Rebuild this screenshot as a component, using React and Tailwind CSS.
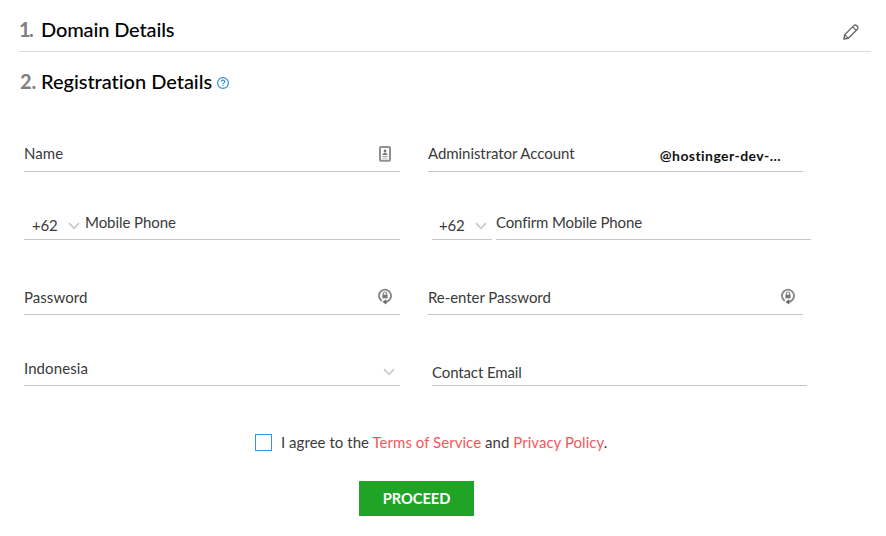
import React from "react";

function Chevron({ className = "" }) {
  return (
    <svg className={`shrink-0 ${className}`} width="12" height="8" viewBox="0 0 12 8" fill="none" stroke="#cacaca" strokeWidth="1.8">
      <path d="M1 1.2 6 6.3 11 1.2" />
    </svg>
  );
}

function Pencil() {
  return (
    <svg className="shrink-0" width="16" height="16" viewBox="0 0 16 16" fill="none" stroke="#666" strokeWidth="1.3" strokeLinejoin="round">
      <path d="M.8 15.2 1.7 10.7 10.8 1.6Q12.4.2 14 1.8T14.4 5.2L5.3 14.3Z" />
      <path d="M1.9 10.9 5.1 14.1M9.6 2.9 13.1 6.4M1.4 13.4 2.6 14.6" />
    </svg>
  );
}

function ContactCard() {
  return (
    <svg className="shrink-0" width="12" height="16" viewBox="0 0 12 16" fill="none">
      <rect x="1" y="1" width="10" height="13.8" rx=".8" stroke="#90908c" strokeWidth="2" />
      <circle cx="6" cy="5" r="1.4" fill="#777" />
      <path d="M3.6 9V8Q6 5.5 8.4 8V9Z" fill="#777" />
      <path d="M3.4 10H8.6V11.2H3.4ZM3.4 11.9H8.6V12.6H3.4Z" fill="#a5a5a5" />
    </svg>
  );
}

function LockCycle() {
  return (
    <svg className="shrink-0" width="14" height="17" viewBox="0 0 14 17" fill="none">
      <path d="M3.7 13A6 6.2 0 1 1 7.5 14" stroke="#888883" strokeWidth="1.9" />
      <path d="M8.3 11.2V16.6L4.4 13.9Z" fill="#666" />
      <path d="M5.3 7V5.7a1.7 1.7 0 0 1 3.4 0V7" stroke="#888" strokeWidth="1.1" />
      <rect x="4.4" y="6.7" width="5.2" height="3.6" fill="#777" />
    </svg>
  );
}

function Help() {
  return (
    <svg className="shrink-0" width="12" height="12" viewBox="0 0 12 12" fill="none" stroke="#2f8fdc">
      <circle cx="6" cy="6" r="5.4" strokeWidth="1.2" />
      <path d="M4.3 4.8Q4.4 3.2 6 3.2T7.7 4.7Q7.7 5.5 6.8 6T6 7.3M6 8.2V9.2" strokeWidth="1.2" />
    </svg>
  );
}

const field = "flex items-end justify-between border-b border-[#c6c6c6]";

export default function App() {
  return (
    <main className="h-[536px] w-[886px] overflow-hidden bg-white font-['Lato','Liberation_Sans',sans-serif] text-[15px] leading-5 tracking-[-0.06px] text-[#3a3a3a] whitespace-nowrap">
      <header className="ml-[19px] flex h-[52px] w-[852px] items-end justify-between border-b border-[#dcdcdc] pr-3 pb-[11px]">
        <h2 className="mb-px flex text-[20px] font-medium tracking-[-0.13px] text-black">
          <span className="w-[22px] font-bold tracking-[-1.5px] text-[#808080]">1.</span>Domain Details
        </h2>
        <Pencil />
      </header>
      <div className="ml-[20px] flex h-[42px] items-end text-[20px] font-medium tracking-[-0.03px] text-black">
        <h2 className="flex w-[197px] pb-[3px]">
          <span className="w-[21px] font-bold text-[#808080]">2.</span>Registration Details
        </h2>
        <div className="pb-[5px]"><Help /></div>
      </div>

      <form className="ml-6">
        <div className="flex h-[78px] items-stretch gap-7">
          <div className={`${field} w-[376px] pr-[9px]`}><span className="pb-[8px] tracking-[0.06px]">Name</span><div className="pb-[9px]"><ContactCard /></div></div>
          <div className={`${field} w-[375px] pr-[22px]`}>
            <span className="pb-[8px]">Administrator Account</span>
            <b className="pb-[5px] text-[14px] tracking-[0.43px] text-[#111]">@hostinger-dev-...</b>
          </div>
        </div>

        <div className="flex h-[68px] items-stretch">
          <div className={`${field} w-[376px] !justify-start`}>
            <span className="w-[44px] pb-[4px] pl-[8px] tracking-[-0.2px]">+62</span>
            <Chevron className="mb-[9px]" />
            <span className="ml-[5px] pb-[7px]">Mobile Phone</span>
          </div>
          <div className={`${field} ml-8 w-[60px] !justify-start`}>
            <span className="w-[43px] pb-[4px] pl-[7px] tracking-[-0.2px]">+62</span>
            <Chevron className="mb-[9px]" />
          </div>
          <div className={`${field} ml-1 w-[315px]`}><span className="pb-[7px] tracking-[-0.14px]">Confirm Mobile Phone</span></div>
        </div>

        <div className="flex h-[75px] items-stretch gap-7">
          <div className={`${field} w-[376px] pr-2`}><span className="pb-[7px] tracking-[0.05px]">Password</span><div className="pb-[9px]"><LockCycle /></div></div>
          <div className={`${field} w-[375px] pr-2`}><span className="pb-[7px]">Re-enter Password</span><div className="pb-[9px]"><LockCycle /></div></div>
        </div>

        <div className="flex h-[71px] items-stretch gap-8">
          <div className={`${field} w-[376px] pr-[5px]`}><span className="pb-[7px] tracking-[0.08px]">Indonesia</span><Chevron className="mb-[9px]" /></div>
          <div className={`${field} w-[375px]`}><span className="pb-[3px] tracking-[-0.12px]">Contact Email</span></div>
        </div>

        <label className="ml-[231px] mt-[46px] flex h-5 items-center">
          <span className="mt-px size-[17px] shrink-0 border border-solid border-[#3f90d8]" />
          <span className="ml-[9px] tracking-[0.04px]">I agree to the <a className="text-[#f4575b]">Terms of Service</a> and <a className="text-[#f4575b]">Privacy Policy</a>.</span>
        </label>
        <button type="button" className="ml-[335px] mt-[29px] flex h-[35px] w-[115px] items-center justify-center bg-[#20a428] pb-[2px] text-[14.7px] font-bold text-white">PROCEED</button>
      </form>
    </main>
  );
}
